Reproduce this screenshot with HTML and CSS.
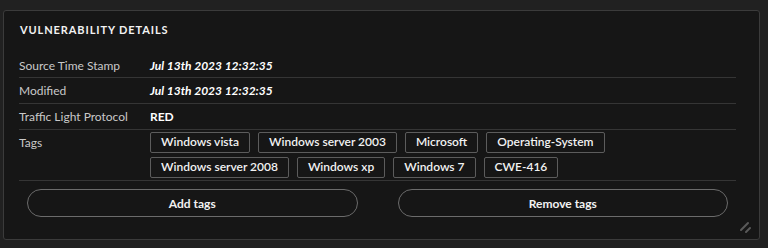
FILE: index.html
```html
<!DOCTYPE html>
<html lang="en">
<head>
  <meta charset="UTF-8">
  <title>Vulnerability details</title>
  <link rel="stylesheet" href="styles.css">
</head>
<body>
  <div class="card">
    <h2 class="card-title">Vulnerability details</h2>

    <div class="details">
      <div class="row">
        <div class="label">Source Time Stamp</div>
        <div class="value date">Jul 13th 2023 12:32:35</div>
      </div>
      <div class="row">
        <div class="label">Modified</div>
        <div class="value date">Jul 13th 2023 12:32:35</div>
      </div>
      <div class="row">
        <div class="label">Traffic Light Protocol</div>
        <div class="value">RED</div>
      </div>
      <div class="row row-tags">
        <div class="label">Tags</div>
        <div class="tags">
          <span class="tag">Windows vista</span>
          <span class="tag">Windows server 2003</span>
          <span class="tag">Microsoft</span>
          <span class="tag">Operating-System</span>
          <span class="tag">Windows server 2008</span>
          <span class="tag">Windows xp</span>
          <span class="tag">Windows 7</span>
          <span class="tag">CWE-416</span>
        </div>
      </div>
    </div>

    <div class="actions">
      <button class="btn">Add tags</button>
      <button class="btn">Remove tags</button>
    </div>

    <svg class="grip" width="14" height="14" viewBox="0 0 14 14" fill="none" stroke="#5a5a5a" stroke-width="2" stroke-linecap="round">
      <line x1="2" y1="10" x2="9" y2="3"></line>
      <line x1="7" y1="12" x2="11" y2="8"></line>
    </svg>
  </div>
</body>
</html>
```

FILE: styles.css
```css
:root {
  --page: #212121;
  --card: #161616;
  --border: #3b3b3b;
  --line: #353535;
  --text: #ffffff;
  --muted: #c9c9c9;
}

* {
  margin: 0;
  padding: 0;
  box-sizing: border-box;
}

body {
  font-family: Lato, 'Open Sans', sans-serif;
  background-color: var(--page);
  color: var(--text);
  font-size: 12px;
}

.card {
  position: relative;
  width: 757px;
  height: 230px;
  margin: 10px 0 0 3px;
  padding: 11px 23px 0 15px;
  background-color: var(--card);
  border: 1px solid var(--border);
  border-radius: 3px;
}

.card-title {
  font-size: 11px;
  font-weight: 700;
  text-transform: uppercase;
  letter-spacing: 0.9px;
  line-height: 16px;
  padding-left: 1px;
  color: #f2f2f2;
  margin-bottom: 15px;
}

.row {
  display: flex;
  align-items: center;
  height: 26px;
  border-bottom: 1px solid var(--line);
}

.row:first-child {
  height: 25px;
}

.label {
  width: 131px;
  flex-shrink: 0;
  color: var(--muted);
}

.value {
  font-weight: 700;
}

.date {
  font-style: italic;
}

.row-tags {
  height: auto;
  align-items: flex-start;
  padding: 2px 0;
}

.row-tags .label {
  padding-top: 3px;
}

.tags {
  display: flex;
  flex-wrap: wrap;
  gap: 4px 8px;
  width: 470px;
}

.tag {
  border: 1px solid #5c5c5c;
  border-radius: 2px;
  padding: 1px 10px 2px;
  line-height: 16px;
  font-weight: 600;
  color: #f2f2f2;
}

.actions {
  display: grid;
  grid-template-columns: 1fr 1fr;
  gap: 40px;
  padding: 8px 8px 0;
}

.btn {
  height: 28px;
  border: 1px solid #6b6b6b;
  border-radius: 14px;
  background: transparent;
  color: #f2f2f2;
  font-family: inherit;
  font-size: 12px;
  font-weight: 700;
  cursor: pointer;
}

.grip {
  position: absolute;
  right: 6px;
  bottom: 5px;
}
```
